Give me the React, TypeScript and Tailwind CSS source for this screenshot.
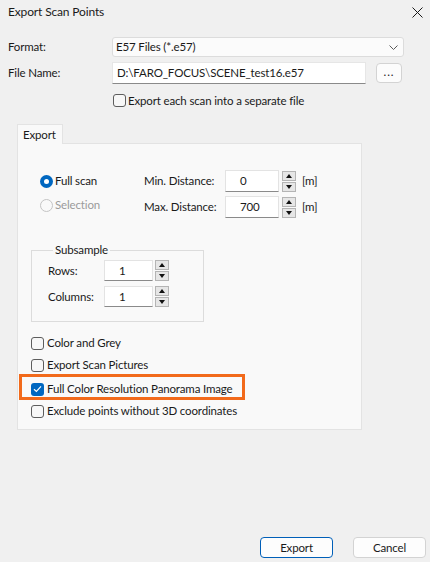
import React from "react";

function Spinner({ h = 21 }: { h?: number }) {
  const half = Math.floor((h - 1) / 2);
  return (
    <div className="flex flex-col gap-px w-[14px]">
      <div
        className="flex items-center justify-center border border-[#b4b4b4] bg-[#e6e6e6]"
        style={{ height: half }}
      >
        <svg width="6" height="4" viewBox="0 0 6 4">
          <path d="M0 4 L3 0 L6 4 Z" fill="#111" />
        </svg>
      </div>
      <div
        className="flex items-center justify-center border border-[#b4b4b4] bg-[#e6e6e6]"
        style={{ height: half }}
      >
        <svg width="6" height="4" viewBox="0 0 6 4">
          <path d="M0 0 L3 4 L6 0 Z" fill="#111" />
        </svg>
      </div>
    </div>
  );
}

function Field({ value, w, h }: { value: string; w: number; h: number }) {
  return (
    <div
      className="flex items-center bg-white border border-[#e3e3e3] border-b-[#8a8a8a] pl-[14px] shrink-0"
      style={{ width: w, height: h }}
    >
      {value}
    </div>
  );
}

function CheckBox({ checked = false }: { checked?: boolean }) {
  if (checked) {
    return (
      <div className="w-[13px] h-[13px] rounded-[3px] bg-[#0067c0] flex items-center justify-center shrink-0">
        <svg width="9" height="8" viewBox="0 0 9 8">
          <path d="M1 4.2 L3.4 6.4 L8 1.4" fill="none" stroke="#fff" strokeWidth="1.2" />
        </svg>
      </div>
    );
  }
  return <div className="w-[13px] h-[13px] rounded-[3px] border border-[#5d5d5d] bg-[#f7f7f7] shrink-0" />;
}

function CheckRow({ label, checked = false }: { label: string; checked?: boolean }) {
  return (
    <div className="flex items-center gap-[3px] whitespace-nowrap">
      <CheckBox checked={checked} />
      <span>{label}</span>
    </div>
  );
}

export default function App() {
  return (
    <div className="w-[430px] h-[562px] bg-[#f0f0f0] flex flex-col text-[11.5px] tracking-[-0.15px] leading-none text-[#1a1a1a] font-[Lato,sans-serif] whitespace-nowrap">
      {/* title bar */}
      <div className="h-[23px] flex items-center justify-between pl-[8px] pr-[6px] pt-[1px]">
        <span className="text-[12px]">Export Scan Points</span>
        <svg width="11" height="11" viewBox="0 0 11 11" className="mr-[1px]">
          <path d="M0.5 0.5 L10.5 10.5 M10.5 0.5 L0.5 10.5" stroke="#1a1a1a" strokeWidth="1" />
        </svg>
      </div>

      {/* format */}
      <div className="mt-[14px] flex items-center">
        <span className="w-[112px] pl-[8px]">Format:</span>
        <div className="w-[292px] h-[20px] rounded-[3px] border border-[#dcdcdc] bg-[#fbfbfb] flex items-center justify-between pl-[3px] pr-[5px]">
          <span>E57 Files (*.e57)</span>
          <svg width="9" height="5" viewBox="0 0 9 5">
            <path d="M0.5 0.5 L4.5 4.5 L8.5 0.5" fill="none" stroke="#5a5a5a" strokeWidth="1" />
          </svg>
        </div>
      </div>

      {/* file name */}
      <div className="mt-[5px] flex items-center">
        <span className="w-[112px] pl-[8px]">File Name:</span>
        <div className="w-[254px] h-[22px] bg-white border border-[#e6e6e6] border-b-[#8a8a8a] flex items-center pl-[4px]">
          D:\FARO_FOCUS\SCENE_test16.e57
        </div>
        <div className="ml-[10px] w-[26px] h-[20px] rounded-[4px] border border-[#d3d3d3] bg-[#fcfcfc] flex items-end justify-center pb-[5px] tracking-[1px]">
          ...
        </div>
      </div>

      {/* separate files */}
      <div className="mt-[10px] pl-[113px] flex items-center gap-[2px]">
        <CheckBox />
        <span>Export each scan into a separate file</span>
      </div>

      {/* tab + panel */}
      <div className="mt-[17px] ml-[17px] w-[345px] flex flex-col">
        <div className="relative z-10 -mb-px w-[46px] h-[20px] bg-[#f9f9f9] border border-b-0 border-[#e3e3e3] flex items-center pl-[5px]">
          Export
        </div>
        <div className="h-[287px] bg-[#f9f9f9] border border-[#e3e3e3] flex flex-col pl-[13px]">
          {/* scan range & distances */}
          <div className="mt-[26px] grid grid-cols-[104px_81px_54px_14px_auto] grid-rows-[22px_22px] gap-y-[4px] items-center pl-[9px]">
            <div className="flex items-center gap-[2px]">
              <div className="w-[13px] h-[13px] rounded-full bg-[#0067c0] flex items-center justify-center">
                <div className="w-[5px] h-[5px] rounded-full bg-white" />
              </div>
              <span>Full scan</span>
            </div>
            <span>Min. Distance:</span>
            <Field value="0" w={54} h={22} />
            <div className="ml-[3px]"><Spinner h={21} /></div>
            <span className="ml-[9px]">[m]</span>

            <div className="flex items-center gap-[2px] -translate-y-[2px]">
              <div className="w-[13px] h-[13px] rounded-full border border-[#c4c4c4]" />
              <span className="text-[#9b9b9b]">Selection</span>
            </div>
            <span>Max. Distance:</span>
            <Field value="700" w={54} h={22} />
            <div className="ml-[3px]"><Spinner h={21} /></div>
            <span className="ml-[9px]">[m]</span>
          </div>

          {/* subsample */}
          <fieldset className="mt-[25px] w-[173px] border border-[#dcdcdc] pl-[16px] pb-[14px]">
            <legend className="ml-[5px] px-[2px] leading-[14px]">Subsample</legend>
            <div className="mt-[3px] grid grid-cols-[56px_49px_auto] grid-rows-[21px_21px] gap-y-[5px] items-center">
              <span>Rows:</span>
              <Field value="1" w={49} h={21} />
              <div className="ml-[2px]"><Spinner h={21} /></div>
              <span>Columns:</span>
              <Field value="1" w={49} h={21} />
              <div className="ml-[2px]"><Spinner h={21} /></div>
            </div>
          </fieldset>

          {/* options */}
          <div className="mt-[10px] flex flex-col">
            <div className="h-[22px] flex items-center"><CheckRow label="Color and Grey" /></div>
            <div className="h-[22px] flex items-center"><CheckRow label="Export Scan Pictures" /></div>
            <div className="-mt-[2px] -ml-[12px] w-[226px] h-[26px] border-[3px] border-[#f26a1b] flex items-center pl-[9px] pt-[4px]">
              <CheckRow label="Full Color Resolution Panorama Image" checked />
            </div>
            <div className="h-[22px] flex items-center"><CheckRow label="Exclude points without 3D coordinates" /></div>
          </div>
        </div>
      </div>

      <div className="flex-1" />

      {/* dialog buttons */}
      <div className="flex justify-end gap-[20px] pr-[4px] pb-[4px]">
        <div className="w-[73px] h-[21px] rounded-[4px] border border-[#005fb8] bg-[#fdfdfd] flex items-center justify-center">
          Export
        </div>
        <div className="w-[73px] h-[21px] rounded-[4px] border border-[#d3d3d3] bg-[#fdfdfd] flex items-center justify-center">
          Cancel
        </div>
      </div>
    </div>
  );
}
